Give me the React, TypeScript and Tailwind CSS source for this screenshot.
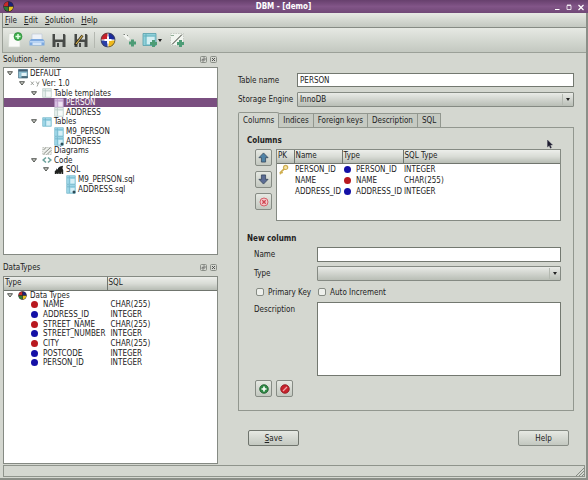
import React, { useState } from 'react';
import clsx from 'clsx';

const BRUSHED = 'bg-linear-to-b from-[#e6e9e3] to-[#c3c8c0]';
const HEADER_CELL = 'bg-linear-to-b from-[#eceeea] via-[#d9dcd6] to-[#b7bcb4] border-[#70756e] font-normal text-left';
const FIELD = 'border border-[#737870] bg-white text-[#222] outline-none';

type IconProps = { className?: string };

const Wheel: React.FC<IconProps> = ({ className }) => (
  <svg viewBox="0 0 16 16" className={clsx('shrink-0', className)}>
    <circle cx="8" cy="8" r="7.5" fill="#fff" />
    <path d="M7.5 7.5V.8A7 7 0 0 0 .8 7.5z" fill="#c8202a" />
    <path d="M8.5 7.5V.8a7 7 0 0 1 6.7 6.7z" fill="#1b2a9c" />
    <path d="M7.5 8.5v6.7A7 7 0 0 1 .8 8.5z" fill="#2a3fa8" />
    <path d="M8.5 8.5v6.7a7 7 0 0 0 6.700-6.700z" fill="#eeb81c" />
    <circle cx="8" cy="8" r="7" fill="none" stroke="#444" strokeWidth=".8" />
    <path d="M8 4.500v7M4.500 8h7" stroke="#fff" strokeWidth="1.800" />
  </svg>
);

const DarkWheel: React.FC<IconProps> = ({ className }) => (
  <svg viewBox="0 0 16 16" className={clsx('shrink-0', className)}>
    <circle cx="8" cy="8" r="7.5" fill="#2b2022" />
    <path d="M7.5 7.5V1.200A7 7 0 0 0 1.200 7.500z" fill="#c92a2a" />
    <path d="M8.5 7.5V1.200a7 7 0 0 1 6.300 6.300z" fill="#1c2378" />
    <path d="M7.5 8.5v6.300a7 7 0 0 1-6.300-6.300z" fill="#2f7c36" />
    <path d="M8.5 8.5v6.300a7 7 0 0 0 6.300-6.300z" fill="#e6c322" />
  </svg>
);

const Plus = ({ x, y, r = 4 }: { x: number; y: number; r?: number }) => (
  <path
    d={`M${x - r} ${y}H${x + r}M${x} ${y - r}V${y + r}`}
    stroke="#4d9c76"
    strokeWidth={r * 0.85}
  />
);

const NewIcon = () => (
  <svg viewBox="0 0 16 16" className="size-4">
    <path d="M2 1.500h8l3 3v10.500H1.500z" fill="#fafbf9" stroke="#d3d8d0" strokeWidth=".7" />
    <circle cx="11" cy="4.500" r="4" fill="#3fae4c" stroke="#238231" strokeWidth=".6" />
    <path d="M8.500 4.500h5M11 2v5" stroke="#e5ffe5" strokeWidth="1.500" />
  </svg>
);

const OpenIcon = () => (
  <svg viewBox="0 0 16 16" className="size-4">
    <path d="M3 2h10v6H3z" fill="#eef2f8" stroke="#c0cad8" strokeWidth=".7" />
    <path d="M2 7h12l1.500 2v4.500H.5V9z" fill="#7da9e0" />
    <path d="M1 9h14v1.500H1z" fill="#b9d4f5" />
    <path d="M3.500 10.500h9v2.500h-9z" fill="#d5e5f8" />
  </svg>
);

const SaveIcon = ({ pen }: { pen?: boolean }) => (
  <svg viewBox="0 0 16 16" className="size-4">
    <path d="M1.500 2h12l1 1v12h-13z" fill="#474a47" />
    <path d="M4 2h8v5.500H4z" fill="#d9dcd7" />
    <path d="M4.500 10h7v5h-7z" fill="#c6cac4" />
    <path d="M6 11h2v4H6z" fill="#474a47" />
    {pen && (
      <>
        <path d="M2 13 9.500 3.500" stroke="#2c2a20" strokeWidth="2.600" />
        <path d="M3 12 9.500 3.500" stroke="#dcb54d" strokeWidth="1.200" />
      </>
    )}
  </svg>
);

const AddVersionIcon = () => (
  <svg viewBox="0 0 16 16" className="size-4">
    <path d="M3 2.500 8 7.500" stroke="#f3f5f1" strokeWidth="2.500" />
    <path d="M2.500 2.500h1.500M6 3.500h1" stroke="#7b807a" strokeWidth="1" />
    <Plus x={11.5} y={11} r={3.5} />
  </svg>
);

const AddTableIcon = () => (
  <svg viewBox="0 0 16 16" className="size-4">
    <path d="M1 1.500h13v12H1z" fill="#8fd0da" stroke="#569eaa" strokeWidth=".8" />
    <path d="M4.500 4.500h8v7.500h-8z" fill="#d4eff2" />
    <path d="M1.500 4h12M4 2v11" stroke="#5cadb9" strokeWidth=".8" />
    <Plus x={11.5} y={11.5} r={3.5} />
  </svg>
);

const AddDiagramIcon = () => (
  <svg viewBox="0 0 16 16" className="size-4">
    <path d="M1.500 1.500h13v12h-13z" fill="#f1f4ef" stroke="#b9beb6" strokeWidth=".7" strokeDasharray="1.500 1" />
    <path d="M3 12.500 13 2.500" stroke="#34382f" strokeWidth="1" />
    <path d="M2 3.500h3" stroke="#8fae96" />
    <Plus x={11.5} y={11.5} r={3.5} />
  </svg>
);

const TableIcon = ({ tone, dot }: { tone: 'blue' | 'pale' | 'violet'; dot?: boolean }) => {
  const fill = { blue: '#a4dcec', pale: '#edf4f2', violet: '#dcc6e6' }[tone];
  const line = { blue: '#6fb3c8', pale: '#b3c6c2', violet: '#b795c4' }[tone];
  return (
    <svg viewBox="0 0 10 10" className="size-[10px] shrink-0">
      <path d="M.7.700h8.600v8.600H.7z" fill={fill} stroke={line} strokeWidth=".7" />
      <path d="M1 2.800h8M3.300 1v8" stroke={line} strokeWidth=".8" />
      <path d="M4.500 4h4v4.500h-4z" fill="#fff" opacity=".55" />
      {dot && <circle cx="8" cy="8" r="1.500" fill="#2d4a55" />}
    </svg>
  );
};

const SolutionIcon = () => (
  <svg viewBox="0 0 10 10" className="size-[10px] shrink-0">
    <path d="M.5.500h9v8.500h-9z" fill="#8fbfd2" stroke="#4a7387" strokeWidth=".7" />
    <path d="M.5.500h9V2.500h-9z" fill="#435f75" />
    <path d="M3.500 4h5v3h-5z" fill="#e3f2f7" />
    <path d="M3.500 8h6" stroke="#29404f" strokeWidth="1.200" />
  </svg>
);

const VersionIcon = () => (
  <svg viewBox="0 0 10 10" className="size-[10px] shrink-0">
    <path d="m.8 3.500 3 3.500m0-3.500-3 3.500M6.200 3.500l1.500 2.500m1.500-2.500L7 8.500" fill="none" stroke="#8b8f89" strokeWidth=".8" />
  </svg>
);

const DiagramIcon = () => (
  <svg viewBox="0 0 10 10" className="size-[10px] shrink-0">
    <path d="M.7 1.500h8.600v7H.7z" fill="#eef0ec" stroke="#b1b5ae" strokeWidth=".7" strokeDasharray="1.500 .7" />
    <path d="m1.500 8 7-6.500M5 8.500l4-4M1.500 4 4 1.500" stroke="#6d726b" strokeWidth=".8" />
  </svg>
);

const CodeIcon = () => (
  <svg viewBox="0 0 10 10" className="size-[10px] shrink-0">
    <path d="M4 2.500 1.200 5 4 7.500M6 2.500 8.800 5 6 7.500" fill="none" stroke="#6fa39d" strokeWidth="1.600" />
  </svg>
);

const SqlIcon = () => (
  <svg viewBox="0 0 10 10" className="size-[10px] shrink-0">
    <path d="M.8 9V6l1.500-1V3.500l1.700 1V3L6 1.500 9 .8l-.5 2.700.7 1.500V9H7.500V6.500L6.700 9H5.300L5 7.300 4.500 9H3.200L3 7.700 2.500 9z" fill="#1f211f" />
  </svg>
);

const KeyIcon = () => (
  <svg viewBox="0 0 12 12" className="size-[11px] shrink-0">
    <circle cx="8.300" cy="3.700" r="2.300" fill="#f4e3a6" stroke="#cfae50" strokeWidth="1.300" />
    <path d="M6.700 5.300 2 10M3.500 8.500l1.500 1.500M2 10l1 1" stroke="#cfae50" strokeWidth="1.800" />
  </svg>
);

const Twisty: React.FC<IconProps> = ({ className }) => (
  <svg viewBox="0 0 6 5" className={clsx('w-[6px] h-[5px] shrink-0', className)}>
    <path d="M.5.700h5L3 4z" fill="#c9ccc6" stroke="#30332f" strokeWidth=".8" />
  </svg>
);

const Dot = ({ color }: { color: 'red' | 'blue' }) => (
  <span className={clsx('size-[7px] rounded-full shrink-0', color === 'red' ? 'bg-[#b8181f]' : 'bg-[#1410a6]')} />
);

const DockTitle = ({ title }: { title: string }) => (
  <div className="flex items-center h-[13px] pr-px">
    <h2 className="flex-1 pt-px">{title}</h2>
    <div className="flex gap-[3px]">
      <button aria-label={`Float ${title}`}>
        <svg viewBox="0 0 7 7" className="size-[7px]">
          <rect x=".5" y=".5" width="6" height="6" rx="1" fill="none" stroke="#8a8f88" />
          <path d="M2 5V3.500h2V5zM3 2.500V2h2v2h-.5" fill="none" stroke="#666" strokeWidth=".7" />
        </svg>
      </button>
      <button aria-label={`Close ${title}`}>
        <svg viewBox="0 0 7 7" className="size-[7px]">
          <rect x=".5" y=".5" width="6" height="6" rx="1" fill="none" stroke="#8a8f88" />
          <path d="m2 2 3 3m0-3L2 5" stroke="#444" strokeWidth=".9" />
        </svg>
      </button>
    </div>
  </div>
);

const INDENT = ['pl-[3px]', 'pl-[15px]', 'pl-[27px]', 'pl-[39px]', 'pl-[51px]'];

const treeItems = [
  { level: 0, label: 'DEFAULT', icon: <SolutionIcon />, open: true },
  { level: 1, label: 'Ver: 1.0', icon: <VersionIcon />, open: true },
  { level: 2, label: 'Table templates', icon: <TableIcon tone="pale" />, open: true },
  { level: 3, label: 'PERSON', icon: <TableIcon tone="violet" /> },
  { level: 3, label: 'ADDRESS', icon: <TableIcon tone="pale" /> },
  { level: 2, label: 'Tables', icon: <TableIcon tone="blue" />, open: true },
  { level: 3, label: 'M9_PERSON', icon: <TableIcon tone="blue" /> },
  { level: 3, label: 'ADDRESS', icon: <TableIcon tone="blue" dot /> },
  { level: 2, label: 'Diagrams', icon: <DiagramIcon /> },
  { level: 2, label: 'Code', icon: <CodeIcon />, open: true },
  { level: 3, label: 'SQL', icon: <SqlIcon />, open: true },
  { level: 4, label: 'M9_PERSON.sql', icon: <TableIcon tone="blue" /> },
  { level: 4, label: 'ADDRESS.sql', icon: <TableIcon tone="blue" dot /> },
];

const dataTypes: { name: string; sql: string; color: 'red' | 'blue' }[] = [
  { name: 'NAME', sql: 'CHAR(255)', color: 'red' },
  { name: 'ADDRESS_ID', sql: 'INTEGER', color: 'blue' },
  { name: 'STREET_NAME', sql: 'CHAR(255)', color: 'red' },
  { name: 'STREET_NUMBER', sql: 'INTEGER', color: 'blue' },
  { name: 'CITY', sql: 'CHAR(255)', color: 'red' },
  { name: 'POSTCODE', sql: 'INTEGER', color: 'blue' },
  { name: 'PERSON_ID', sql: 'INTEGER', color: 'blue' },
];

const columns: { name: string; sql: string; color: 'red' | 'blue'; pk?: boolean }[] = [
  { name: 'PERSON_ID', sql: 'INTEGER', color: 'blue', pk: true },
  { name: 'NAME', sql: 'CHAR(255)', color: 'red' },
  { name: 'ADDRESS_ID', sql: 'INTEGER', color: 'blue' },
];

const tabs = ['Columns', 'Indices', 'Foreign keys', 'Description', 'SQL'];

const IconButton = ({ label, children }: { label: string; children: React.ReactNode }) => (
  <button
    aria-label={label}
    className={`size-[17px] flex items-center justify-center rounded-[2px] border border-[#868b84] ${BRUSHED}`}
  >
    {children}
  </button>
);

const Arrow = ({ down }: { down?: boolean }) => (
  <svg viewBox="0 0 12 12" className={clsx('size-[11px]', down && 'rotate-180')}>
    <path
      d="M6 1 11 6.200H8.300V11H3.700V6.200H1z"
      fill={down ? '#5b6c94' : '#4f83a6'}
      stroke="#2f3f55"
      strokeWidth=".8"
    />
  </svg>
);

const Combo = ({ id, options }: { id: string; options: string[] }) => (
  <div className="relative flex-1 min-w-0">
    <select
      id={id}
      className="block w-full h-[15px] pl-[2px] pt-px appearance-none border border-[#858a83] rounded-[1px] bg-linear-to-b from-[#e9ebe7] to-[#b9beb6] outline-none"
    >
      {options.map(o => <option key={o}>{o}</option>)}
    </select>
    <span className="absolute right-px top-[2px] w-[11px] h-[11px] border-l border-[#b4b9b1] flex items-center justify-center pointer-events-none">
      <svg viewBox="0 0 4 3" className="w-1 h-[3px]"><path d="M0 0h4L2 3z" fill="#222" /></svg>
    </span>
  </div>
);

const App: React.FC = () => {
  const [selected, setSelected] = useState(3);
  const [activeTab, setActiveTab] = useState('Columns');

  return (
    <div className="min-h-screen flex flex-col bg-[#d4d7d0] text-[#222] text-[8px] leading-[10px] font-['DejaVu_Sans_Condensed','DejaVu_Sans',sans-serif] border-r-2 border-b-2 border-[#8b8f88] cursor-default">
      {/* Title bar */}
      <header className="h-[13px] shrink-0 -mr-[2px] flex items-center px-[3px] bg-linear-to-b from-[#67406d] via-[#825588] to-[#704876] text-white">
        <DarkWheel className="size-[11px]" />
        <h1 className="flex-1 text-center font-bold pt-px">DBM - [demo]</h1>
        <div className="flex gap-[4px]">
          <button aria-label="Minimize">
            <svg viewBox="0 0 8 8" className="size-2"><path d="M2 6.500h4.500" stroke="#fff" /></svg>
          </button>
          <button aria-label="Maximize">
            <svg viewBox="0 0 8 8" className="size-2"><path d="M2 2.500h4v4H2zM2 2h4" fill="none" stroke="#fff" strokeWidth=".8" /></svg>
          </button>
          <button aria-label="Close">
            <svg viewBox="0 0 8 8" className="size-2"><path d="m1.500 2 5 5m0-5-5 5" stroke="#fff" strokeWidth="1.200" /></svg>
          </button>
        </div>
      </header>

      {/* Menu */}
      <nav className={`flex items-center gap-[7px] h-[15px] shrink-0 pl-[2px] pt-[2px] ml-[2px] border-l border-b border-[#868b84] ${BRUSHED}`}>
        {['File', 'Edit', 'Solution', 'Help'].map(m => (
          <button key={m}><u>{m[0]}</u>{m.slice(1)}</button>
        ))}
      </nav>

      {/* Toolbar */}
      <div className={`flex items-center h-[25px] shrink-0 pl-[4px] ml-[2px] border-l border-b border-[#9ba098] ${BRUSHED}`}>
        <div className="flex gap-[6px]">
          <button aria-label="New"><NewIcon /></button>
          <button aria-label="Open"><OpenIcon /></button>
          <button aria-label="Save solution"><SaveIcon /></button>
          <button aria-label="Save as"><SaveIcon pen /></button>
        </div>
        <div className="w-px h-4 mx-[5px] bg-[#b4b8b1]" />
        <div className="flex gap-[5px]">
          <button aria-label="Data type"><Wheel className="size-4" /></button>
          <button aria-label="Add version"><AddVersionIcon /></button>
          <button aria-label="Add table" className="flex items-center mr-[2px]">
            <AddTableIcon />
            <svg viewBox="0 0 4 3" className="w-1 h-[3px]"><path d="M0 0h4L2 3z" fill="#222" /></svg>
          </button>
          <button aria-label="Add diagram"><AddDiagramIcon /></button>
        </div>
      </div>

      <main className="flex-1 flex ml-[3px]">
        {/* Docks */}
        <aside className="w-[215px] shrink-0 flex flex-col">
          <DockTitle title="Solution - demo" />
          <div className="h-[188px] mt-px pt-px border border-[#858a83] bg-white">
            <ul className="grid auto-rows-fr h-[125px]">
              {treeItems.map((item, i) => (
                <li key={i} className="flex min-h-0">
                  <button
                    onClick={() => setSelected(i)}
                    className={clsx(
                      'w-full flex items-center min-h-0',
                      INDENT[item.level],
                      selected === i && 'bg-[#7a4f80] text-white'
                    )}
                  >
                    <Twisty className={clsx('mr-[5px]', !item.open && 'invisible')} />
                    {item.icon}
                    <span className="ml-[2px] pt-px">{item.label}</span>
                  </button>
                </li>
              ))}
            </ul>
          </div>

          <div className="mt-[6px]"><DockTitle title="DataTypes" /></div>
          <div className="flex-1 mt-[2px] border border-[#858a83] bg-white">
            <table className="w-full table-fixed border-collapse">
              <thead>
                <tr className="h-[13px]">
                  <th className={`w-[103px] pl-px border-r border-b ${HEADER_CELL}`}>Type</th>
                  <th className={`pl-px border-b ${HEADER_CELL}`}>SQL</th>
                </tr>
              </thead>
            </table>
            <table className="w-full h-[77px] table-fixed border-collapse leading-[9px]">
              <tbody>
                <tr>
                  <td colSpan={2} className="pl-[3px]">
                    <div className="flex items-center h-[9px]">
                      <Twisty className="mr-[5px]" />
                      <DarkWheel className="size-[9px]" />
                      <span className="ml-[3px]">Data Types</span>
                    </div>
                  </td>
                </tr>
                {dataTypes.map(t => (
                  <tr key={t.name}>
                    <td className="w-[105px] pl-[27px]">
                      <div className="flex items-center gap-[5px] h-[9px]"><Dot color={t.color} />{t.name}</div>
                    </td>
                    <td>{t.sql}</td>
                  </tr>
                ))}
              </tbody>
            </table>
          </div>
        </aside>

        {/* Editor */}
        <section className="flex-1 min-w-0 pl-5 pr-[12px] pt-5">
          <div className="grid grid-cols-[59px_1fr] items-center gap-y-[5px]">
            <label htmlFor="table-name" className="pt-px">Table name</label>
            <input id="table-name" defaultValue="PERSON" className={`w-full h-[14px] px-[2px] pt-px ${FIELD}`} />
            <label htmlFor="engine" className="pt-px">Storage Engine</label>
            <Combo id="engine" options={['InnoDB', 'MyISAM']} />
          </div>

          <div role="tablist" className="flex items-end mt-1 h-4">
            {tabs.map(tab => (
              <button
                key={tab}
                role="tab"
                aria-selected={activeTab === tab}
                onClick={() => setActiveTab(tab)}
                className={clsx(
                  'border-t border-r border-[#92978f] px-1',
                  activeTab === tab
                    ? 'h-4 relative -mb-px border-l bg-[#d4d7d0] rounded-t-[2px]'
                    : 'h-[14px] bg-[#c6cac2]'
                )}
              >
                {tab}
              </button>
            ))}
          </div>

          <div className="border border-[#92978f] pt-[7px] pl-2 pr-3 pb-[13px]">
            <h3 className="font-bold pt-px">Columns</h3>
            <div className="flex gap-1 mt-[3px] pl-2">
              <div className="flex flex-col gap-[5px]">
                <IconButton label="Move up"><Arrow /></IconButton>
                <IconButton label="Move down"><Arrow down /></IconButton>
                <IconButton label="Delete column">
                  <svg viewBox="0 0 10 10" className="size-[10px]">
                    <circle cx="5" cy="5" r="4" fill="#f3c9cb" stroke="#d6606a" />
                    <path d="m3.300 3.300 3.400 3.400m0-3.400L3.300 6.700" stroke="#cf4450" strokeWidth="1.300" />
                  </svg>
                </IconButton>
              </div>
              <div className="flex-1 h-[72px] border border-[#858a83] bg-white">
                <table className="w-full table-fixed border-collapse">
                  <thead>
                    <tr className="h-[13px]">
                      <th className={`w-[17px] pl-px border-r border-b ${HEADER_CELL}`}>PK</th>
                      <th className={`w-[48px] pl-px border-r border-b ${HEADER_CELL}`}>Name</th>
                      <th className={`w-[61px] pl-px border-r border-b ${HEADER_CELL}`}>Type</th>
                      <th className={`pl-px border-b ${HEADER_CELL}`}>SQL Type</th>
                    </tr>
                  </thead>
                  <tbody className="whitespace-nowrap leading-[11px]">
                    {columns.map(c => (
                      <tr key={c.name} className="h-[11px]">
                        <td><div className="h-[11px] pl-px">{c.pk && <KeyIcon />}</div></td>
                        <td className="pl-px">{c.name}</td>
                        <td className="pl-[2px]">
                          <div className="flex items-center gap-[5px]"><Dot color={c.color} />{c.name}</div>
                        </td>
                        <td className="pl-px">{c.sql}</td>
                      </tr>
                    ))}
                  </tbody>
                </table>
              </div>
            </div>

            <h3 className="mt-3 pt-px font-bold">New column</h3>
            <div className="grid grid-cols-[63px_1fr] gap-y-[4px] mt-[3px] pl-[7px] items-center">
              <label htmlFor="col-name" className="pt-px">Name</label>
              <input id="col-name" className={`w-full h-[15px] px-[2px] pt-px ${FIELD}`} />
              <label htmlFor="col-type" className="pt-px">Type</label>
              <Combo id="col-type" options={['']} />
            </div>
            <div className="flex items-center pl-[9px] mt-[5px] h-3">
              {['Primary Key', 'Auto Increment'].map(label => (
                <label key={label} className="flex items-center gap-1 mr-[7px]">
                  <input type="checkbox" className="appearance-none size-2 rounded-[2px] border border-[#868b84] bg-[#eef0ec] checked:bg-[#7a4f80]" />
                  <span className="pt-px">{label}</span>
                </label>
              ))}
            </div>
            <div className="grid grid-cols-[63px_1fr] mt-1 pl-[7px]">
              <label htmlFor="col-desc" className="pt-[3px]">Description</label>
              <textarea id="col-desc" className={`block w-full h-[74px] px-[2px] resize-none ${FIELD}`} />
            </div>
            <div className="flex gap-1 pl-2 mt-1">
              <IconButton label="Add column">
                <svg viewBox="0 0 10 10" className="size-[10px]">
                  <circle cx="5" cy="5" r="4.300" fill="#2f8a45" stroke="#1d5c2d" strokeWidth=".8" />
                  <path d="M2.500 5h5M5 2.500v5" stroke="#fff" strokeWidth="1.600" />
                </svg>
              </IconButton>
              <IconButton label="Cancel">
                <svg viewBox="0 0 10 10" className="size-[10px]">
                  <circle cx="5" cy="5" r="4.300" fill="#c7222c" stroke="#8a141c" strokeWidth=".8" />
                  <path d="m3 7 4-4" stroke="#f0a4a8" strokeWidth="1.200" />
                </svg>
              </IconButton>
            </div>
          </div>

          <div className="flex justify-between mt-[19px] pl-[10px] pr-[5px]">
            <button className={`w-[51px] h-4 pt-px rounded-[2px] border border-[#6f746d] ${BRUSHED}`}><u>S</u>ave</button>
            <button className={`w-[51px] h-4 pt-px rounded-[2px] border border-[#868b84] ${BRUSHED}`}>Help</button>
          </div>
        </section>
      </main>

      {/* Mouse pointer */}
      <svg viewBox="0 0 6 9" className="absolute left-[547px] top-[139px] w-[6px] h-[10px] pointer-events-none">
        <path d="M.5.500v7L2.200 6l1.200 2.700 1-.5L3.300 5.500h2.200z" fill="#1c1b2e" stroke="#3b3a4c" strokeWidth=".4" />
      </svg>

      {/* Status bar */}
      <footer className="h-3 shrink-0 mt-px mb-px ml-[3px] mr-px flex justify-end items-end border border-[#8f948c]">
        <svg viewBox="0 0 8 8" className="size-2">
          <path d="M0 8 8 0M3 8l5-5M6 8l2-2" stroke="#7c817a" strokeWidth=".9" />
        </svg>
      </footer>
    </div>
  );
};

export default App;
